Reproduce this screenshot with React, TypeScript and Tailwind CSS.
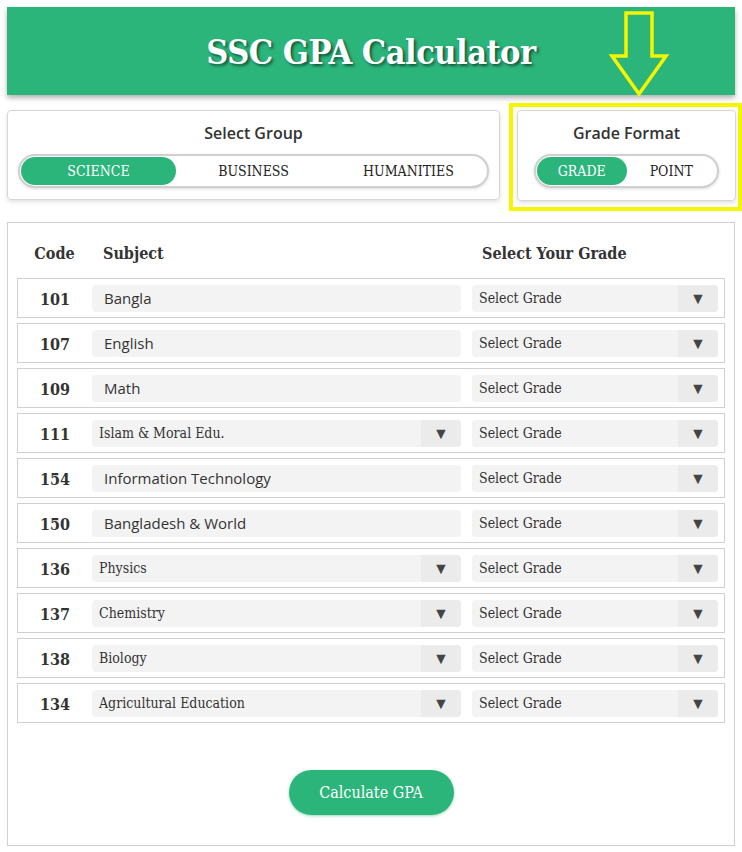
import React from "react";

const slab = "font-['Roboto_Slab','DejaVu_Serif_Condensed','DejaVu_Serif',serif]";
const sans = "font-['Open_Sans','Noto_Sans',sans-serif]";

type Row = { code: string; subject: string; select?: boolean };

const rows: Row[] = [
  { code: "101", subject: "Bangla" },
  { code: "107", subject: "English" },
  { code: "109", subject: "Math" },
  { code: "111", subject: "Islam & Moral Edu.", select: true },
  { code: "154", subject: "Information Technology" },
  { code: "150", subject: "Bangladesh & World" },
  { code: "136", subject: "Physics", select: true },
  { code: "137", subject: "Chemistry", select: true },
  { code: "138", subject: "Biology", select: true },
  { code: "134", subject: "Agricultural Education", select: true },
];

function Caret() {
  return (
    <div className="flex h-full w-[40px] items-center justify-center rounded-r-[4px] bg-[#ebebeb] text-[16px] text-[#444]">
      ▼
    </div>
  );
}

function Toggle({ items }: { items: string[] }) {
  return (
    <div className="flex h-[34px] rounded-full border-2 border-[#d0d0d0] bg-white p-px shadow-[0_1px_3px_rgba(0,0,0,0.15)]">
      {items.map((t, i) => (
        <div
          key={t}
          className={`flex flex-1 items-center justify-center rounded-full text-[14px] ${slab} ${
            i === 0 ? "bg-[#2bb57b] text-white" : "text-[#222]"
          }`}
        >
          {t}
        </div>
      ))}
    </div>
  );
}

export default function App() {
  return (
    <div className="relative min-h-[852px] w-[742px] bg-white">
      <div className="px-[7px] pt-[7px]">
        <div className="flex h-[88px] items-center justify-center bg-[#2bb57b] shadow-[0_3px_5px_rgba(0,0,0,0.3)]">
          <h1
            className={`pt-[2px] text-[34px] font-bold tracking-[-0.5px] text-white ${slab} [text-shadow:2px_2px_3px_rgba(0,0,0,0.55)]`}
          >
            SSC GPA Calculator
          </h1>
        </div>
      </div>

      <div className="mt-[8px] flex items-start pl-[7px]">
        <div className="mt-[7px] h-[90px] w-[493px] rounded-[4px] border border-[#d6d6d6] px-[10px] pt-[10px] shadow-[0_2px_4px_rgba(0,0,0,0.12)]">
          <div className={`mb-[9px] text-center text-[16px] font-semibold text-[#333] ${sans}`}>Select Group</div>
          <Toggle items={["SCIENCE", "BUSINESS", "HUMANITIES"]} />
        </div>
        <div className="ml-[9px] h-[108px] flex-1 border-4 border-[#f5f500] pb-[2px] pl-[4px] pr-[2px] pt-[3px]">
          <div className="h-[91px] rounded-[4px] border border-[#d6d6d6] px-[16px] pt-[10px] shadow-[0_2px_4px_rgba(0,0,0,0.12)]">
            <div className={`mb-[9px] text-center text-[16px] font-semibold text-[#333] ${sans}`}>Grade Format</div>
            <Toggle items={["GRADE", "POINT"]} />
          </div>
        </div>
      </div>

      <div className="mx-[7px] mt-[11px] h-[624px] border border-[#d0d0d0] px-[9px]">
        <div className={`flex h-[55px] items-center pt-[6px] text-[16px] font-semibold text-[#333] ${slab}`}>
          <div className="w-[75px] text-center">Code</div>
          <div className="w-[380px] pl-[11px]">Subject</div>
          <div className="flex-1 pl-[10px]">Select Your Grade</div>
        </div>

        <div className="flex flex-col gap-[5px]">
          {rows.map((r) => (
            <div key={r.code} className="flex h-[40px] items-center border border-[#d0d0d0] pr-[6px]">
              <div className={`w-[74px] pt-[3px] text-center text-[16px] font-semibold text-[#333] ${slab}`}>{r.code}</div>
              {r.select ? (
                <div className="flex h-[27px] w-[369px] items-center rounded-[4px] bg-[#f3f3f3]">
                  <div className={`flex-1 pl-[7px] text-[14px] text-[#333] ${slab}`}>{r.subject}</div>
                  <Caret />
                </div>
              ) : (
                <div className={`flex h-[27px] w-[369px] items-center rounded-[4px] bg-[#f3f3f3] pl-[12px] text-[15px] text-[#333] ${sans}`}>
                  {r.subject}
                </div>
              )}
              <div className="ml-[11px] flex h-[27px] flex-1 items-center rounded-[4px] bg-[#f3f3f3]">
                <div className={`flex-1 pl-[7px] text-[14px] text-[#333] ${slab}`}>Select Grade</div>
                <Caret />
              </div>
            </div>
          ))}
        </div>

        <div className="mt-[47px] flex justify-center">
          <button
            className={`h-[45px] w-[165px] rounded-full bg-[#2bb57b] text-[16px] text-white shadow-[0_1px_3px_rgba(43,181,123,0.5)] ${slab}`}
          >
            Calculate GPA
          </button>
        </div>
      </div>

      <svg className="absolute left-[608px] top-[10px]" width="62" height="88" viewBox="0 0 62 88">
        <path
          d="M18 3 H44 V46 H58 L31 84 L4 46 H18 Z"
          fill="none"
          stroke="#f5f500"
          strokeWidth="3.5"
          strokeLinejoin="miter"
        />
      </svg>
    </div>
  );
}
